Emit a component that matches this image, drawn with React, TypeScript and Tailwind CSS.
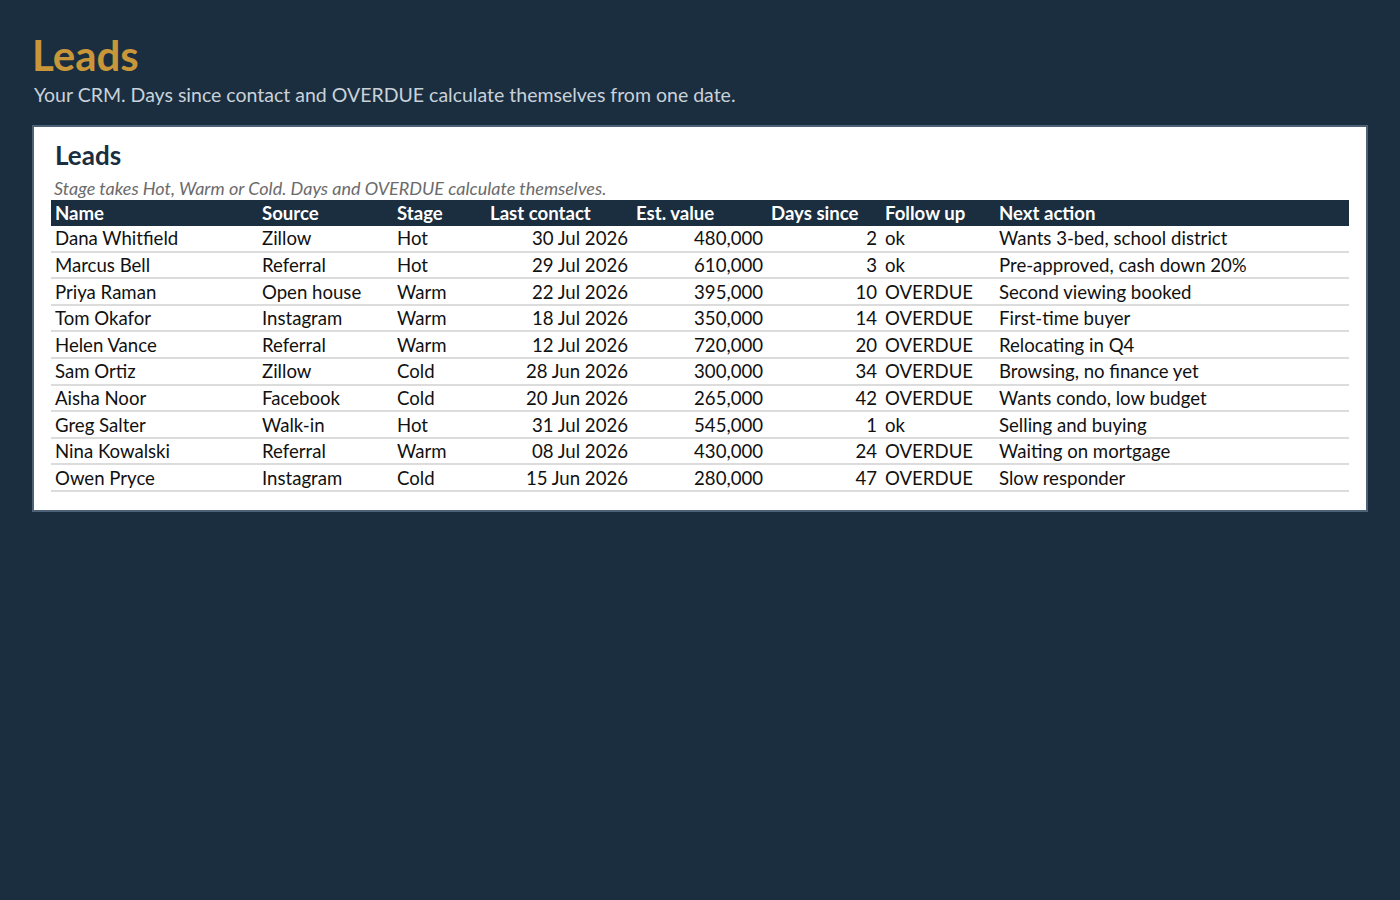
const leads = [
  ["Dana Whitfield", "Zillow", "Hot", "30 Jul 2026", "480,000", "2", "ok", "Wants 3-bed, school district"],
  ["Marcus Bell", "Referral", "Hot", "29 Jul 2026", "610,000", "3", "ok", "Pre-approved, cash down 20%"],
  ["Priya Raman", "Open house", "Warm", "22 Jul 2026", "395,000", "10", "OVERDUE", "Second viewing booked"],
  ["Tom Okafor", "Instagram", "Warm", "18 Jul 2026", "350,000", "14", "OVERDUE", "First-time buyer"],
  ["Helen Vance", "Referral", "Warm", "12 Jul 2026", "720,000", "20", "OVERDUE", "Relocating in Q4"],
  ["Sam Ortiz", "Zillow", "Cold", "28 Jun 2026", "300,000", "34", "OVERDUE", "Browsing, no finance yet"],
  ["Aisha Noor", "Facebook", "Cold", "20 Jun 2026", "265,000", "42", "OVERDUE", "Wants condo, low budget"],
  ["Greg Salter", "Walk-in", "Hot", "31 Jul 2026", "545,000", "1", "ok", "Selling and buying"],
  ["Nina Kowalski", "Referral", "Warm", "08 Jul 2026", "430,000", "24", "OVERDUE", "Waiting on mortgage"],
  ["Owen Pryce", "Instagram", "Cold", "15 Jun 2026", "280,000", "47", "OVERDUE", "Slow responder"],
];

const columns = [
  { label: "Name", w: "w-[207px]", right: false },
  { label: "Source", w: "w-[135px]", right: false },
  { label: "Stage", w: "w-[93px]", right: false },
  { label: "Last contact", w: "w-[146px]", right: true },
  { label: "Est. value", w: "w-[135px]", right: true },
  { label: "Days since", w: "w-[114px]", right: true },
  { label: "Follow up", w: "w-[114px]", right: false },
  { label: "Next action", w: "flex-1", right: false },
];

export default function App() {
  return (
    <div className="min-h-[900px] bg-[#1a2e40] px-8 pt-[30px] font-['Lato','Liberation_Sans',sans-serif]">
      {/* Page heading */}
      <h1 className="text-[42px] font-bold leading-[51px] text-[#c9973a]">Leads</h1>
      <p className="text-[19.5px] leading-[28px] text-[#c9d1d9] pl-[2px]">
        Your CRM. Days since contact and OVERDUE calculate themselves from one date.
      </p>

      {/* Card */}
      <div className="mt-[16px] border-2 border-[#4d6276] bg-white px-[17px] pt-[12px] pb-[18px]">
        <h2 className="text-[26px] font-bold leading-[32px] text-[#1a2e40] pl-[4px]">Leads</h2>
        <p className="mt-[5px] text-[18px] italic leading-[24px] text-[#6b6b6b] pl-[3px]">
          Stage takes Hot, Warm or Cold. Days and OVERDUE calculate themselves.
        </p>

        <div className="text-[18.6px]">
          <div className="flex h-[26px] items-center bg-[#1a2e40] pt-[1px] font-bold text-white">
            {columns.map((c) => (
              <div key={c.label} className={`${c.w} px-[4px]`}>
                {c.label}
              </div>
            ))}
          </div>
          {leads.map((row) => (
            <div
              key={row[0]}
              className="flex h-[26.6px] items-center border-b-2 border-[#dcdcdc] pt-[2px] text-[#111]"
            >
              {row.map((cell, i) => (
                <div
                  key={i}
                  className={`${columns[i].w} px-[4px] ${columns[i].right ? "text-right" : "text-left"}`}
                >
                  {cell}
                </div>
              ))}
            </div>
          ))}
        </div>
      </div>
    </div>
  );
}
